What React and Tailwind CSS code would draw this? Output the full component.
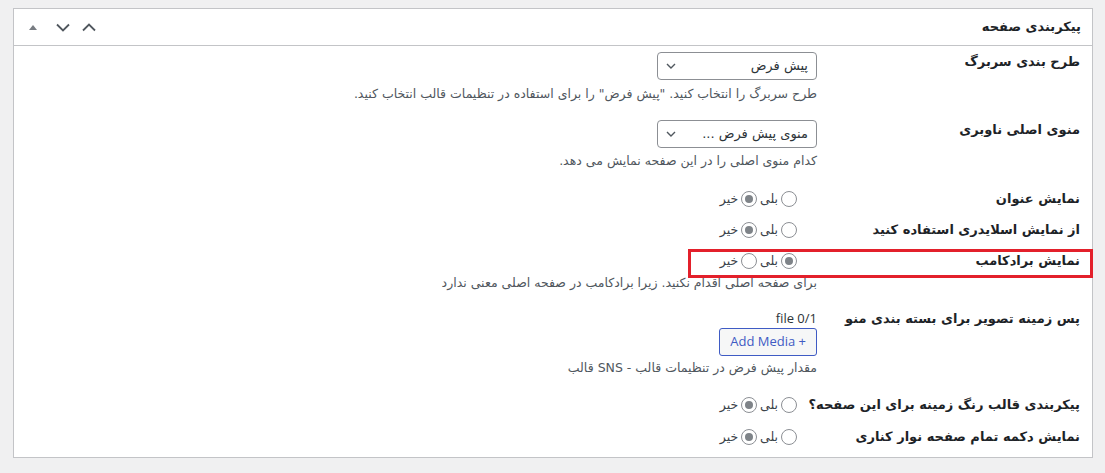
import React from "react";

const fa = { fontFamily: '"DejaVu Sans", "Noto Sans", sans-serif' };

function Radio({ checked }) {
  return (
    <span className="w-[16px] h-[16px] rounded-full border border-[#8c8f94] bg-white flex items-center justify-center shrink-0">
      {checked && <span className="w-[8px] h-[8px] rounded-full bg-[#7e8388]" />}
    </span>
  );
}

function YesNo({ yes }) {
  return (
    <div className="flex items-center text-[12.5px] text-[#3c434a] leading-none pr-[20px]">
      <Radio checked={yes} />
      <span className="w-[24px] text-center">بلی</span>
      <Radio checked={!yes} />
      <span className="w-[24px] text-center">خیر</span>
    </div>
  );
}

function Label({ children, className = "" }) {
  return (
    <div className={"w-[275px] shrink-0 pr-[12px] text-[13px] font-bold text-[#1d2327] whitespace-nowrap " + className}>
      {children}
    </div>
  );
}

function Select({ value }) {
  return (
    <div className="w-[160px] h-[28px] border border-[#8c8f94] rounded-[4px] bg-white flex items-center justify-between pr-[8px] pl-[8px] text-[13px] text-[#2c3338]">
      <span>{value}</span>
      <svg width="10" height="6" viewBox="0 0 10 6" fill="none" stroke="#50575e" strokeWidth="1.4">
        <path d="M1 1l4 4 4-4" />
      </svg>
    </div>
  );
}

function RadioRow({ label, yes, className = "" }) {
  return (
    <div className={"flex items-center h-[26px] " + className}>
      <Label>{label}</Label>
      <YesNo yes={yes} />
    </div>
  );
}

export default function App() {
  return (
    <div className="min-h-[473px] bg-[#f0f0f1] pt-[8px] px-[13px]" style={fa}>
      <div dir="rtl" className="bg-white border border-[#c3c4c7] w-[1080px] pb-[7px]">
        <div className="h-[37px] border-b border-[#c3c4c7] flex items-center justify-between pr-[11px] pl-[14px]">
          <span className="text-[13px] font-bold text-[#1d2327]">پیکربندی صفحه</span>
          <div className="flex items-center gap-[12px]" dir="ltr">
            <svg width="10" height="6" viewBox="0 0 10 6"><path d="M1 6L5 1l4 5z" fill="#787c82" /></svg>
            <svg className="ml-[6px]" width="14" height="9" viewBox="0 0 14 9" fill="none" stroke="#50575e" strokeWidth="1.8">
              <path d="M1 1.5l6 6 6-6" />
            </svg>
            <svg width="14" height="9" viewBox="0 0 14 9" fill="none" stroke="#50575e" strokeWidth="1.8">
              <path d="M1 7.5l6-6 6 6" />
            </svg>
          </div>
        </div>

        <div className="flex pt-[6px]">
          <Label className="pt-[1px] leading-[18px]">طرح بندی سربرگ</Label>
          <div>
            <Select value="پیش فرض" />
            <p className="mt-[5px] text-[12.5px] leading-[18px] text-[#50575e]">
              طرح سربرگ را انتخاب کنید. "پیش فرض" را برای استفاده در تنظیمات قالب انتخاب کنید.
            </p>
          </div>
        </div>

        <div className="flex pt-[17px]">
          <Label className="pt-[1px] leading-[18px]">منوی اصلی ناوبری</Label>
          <div>
            <Select value="منوی پیش فرض ..." />
            <p className="mt-[4px] text-[12.5px] leading-[18px] text-[#50575e]">
              کدام منوی اصلی را در این صفحه نمایش می دهد.
            </p>
          </div>
        </div>

        <RadioRow className="mt-[16px]" label="نمایش عنوان" yes={false} />
        <RadioRow className="mt-[5px]" label="از نمایش اسلایدری استفاده کنید" yes={false} />
        <div className="relative">
          <RadioRow className="mt-[5px]" label="نمایش برادکامب" yes={true} />
          <div className="absolute right-[-1px] top-[1px] w-[405px] h-[29px] border-[3px] border-[#e3202b]" />
        </div>
        <div className="flex">
          <div className="w-[275px] shrink-0" />
          <p className="text-[12.5px] leading-[18px] text-[#50575e]">
            برای صفحه اصلی اقدام نکنید. زیرا برادکامب در صفحه اصلی معنی ندارد
          </p>
        </div>

        <div className="flex mt-[17px]">
          <Label className="leading-[20px]">پس زمینه تصویر برای بسته بندی منو</Label>
          <div>
            <div className="text-[13px] leading-[18px] text-[#2c3338]" style={{ fontFamily: '"Open Sans", sans-serif' }}>file 0/1</div>
            <button
              dir="ltr"
              className="mt-[1px] h-[28px] px-[10px] border border-[#3f5bc4] rounded-[3px] bg-[#f6f7f7] text-[13px] text-[#3f5bc4]"
              style={{ fontFamily: '"Open Sans", sans-serif' }}
            >
              Add Media +
            </button>
            <p className="mt-[3px] text-[12.5px] leading-[18px] text-[#50575e]">
              مقدار پیش فرض در تنظیمات قالب - SNS قالب
            </p>
          </div>
        </div>

        <RadioRow className="mt-[15px]" label="پیکربندی قالب رنگ زمینه برای این صفحه؟" yes={false} />
        <RadioRow className="mt-[6px]" label="نمایش دکمه تمام صفحه نوار کناری" yes={false} />
      </div>
    </div>
  );
}
